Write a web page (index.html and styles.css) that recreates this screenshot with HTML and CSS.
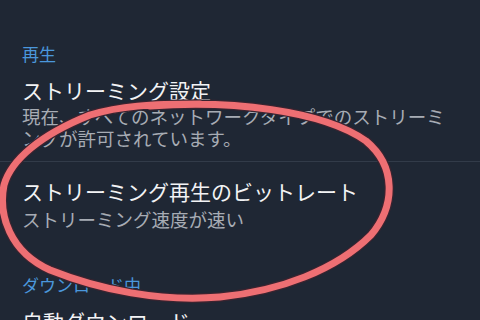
FILE: index.html
```html
<!DOCTYPE html>
<html lang="ja">
<head>
<meta charset="utf-8">
<link rel="stylesheet" href="styles.css">
</head>
<body>
<div class="screen">
  <section class="group">
    <div class="group-title">再生</div>
    <div class="item">
      <div class="item-title">ストリーミング設定</div>
      <div class="item-sub">現在、すべてのネットワークタイプでのストリーミ<br>ングが許可されています。</div>
    </div>
  </section>
  <div class="divider"></div>
  <section class="group">
    <div class="item second">
      <div class="item-title">ストリーミング再生のビットレート</div>
      <div class="item-sub lower">ストリーミング速度が速い</div>
    </div>
  </section>
  <section class="group">
    <div class="group-title dl">ダウンロード中</div>
    <div class="item">
      <div class="item-title">自動ダウンロード</div>
    </div>
  </section>
  <svg class="scribble" width="480" height="320" viewBox="0 0 480 320">
    <path d="M 150 106 C 230 100, 322 110, 366 141 C 396 166, 396 205, 371 235 C 336 270, 280 291, 220 297 C 160 302, 100 290, 50 270 C 10 252, -2 215, 4 185 C 11 160, 40 135, 90 115 C 120 106, 150 104, 200 104" fill="none" stroke="#3a2430" stroke-width="9.5" stroke-linecap="round"/>
    <path d="M 150 106 C 230 100, 322 110, 366 141 C 396 166, 396 205, 371 235 C 336 270, 280 291, 220 297 C 160 302, 100 290, 50 270 C 10 252, -2 215, 4 185 C 11 160, 40 135, 90 115 C 120 106, 150 104, 200 104" fill="none" stroke="#ee6f73" stroke-width="7" stroke-linecap="round"/>
  </svg>
</div>
</body>
</html>
```
FILE: styles.css
```css
html, body {
  margin: 0;
  padding: 0;
  background: #1f2734;
}
.screen {
  position: relative;
  width: 480px;
  height: 320px;
  overflow: hidden;
  background: #1f2734;
  font-family: "Noto Sans CJK JP", "Noto Sans", sans-serif;
  box-sizing: border-box;
  padding-top: 41px;
}
.group {
  padding: 0 22px;
}
.group-title {
  color: #4b97dc;
  font-size: 17px;
  line-height: 26px;
}
.group-title.dl {
  margin-top: 42px;
}
.item {
  padding-top: 9px;
}
.item.second {
  padding-top: 15px;
}
.item-title {
  color: #f2f3f5;
  font-size: 21px;
  line-height: 28px;
}
.item-sub {
  color: #a7acb4;
  font-size: 18.5px;
  line-height: 22px;
  margin-top: 1px;
}
.item-sub.lower {
  margin-top: 3px;
}
.divider {
  height: 1px;
  background: #323b49;
  margin-top: 12px;
}
.scribble {
  position: absolute;
  left: 0;
  top: 0;
  pointer-events: none;
}
```
